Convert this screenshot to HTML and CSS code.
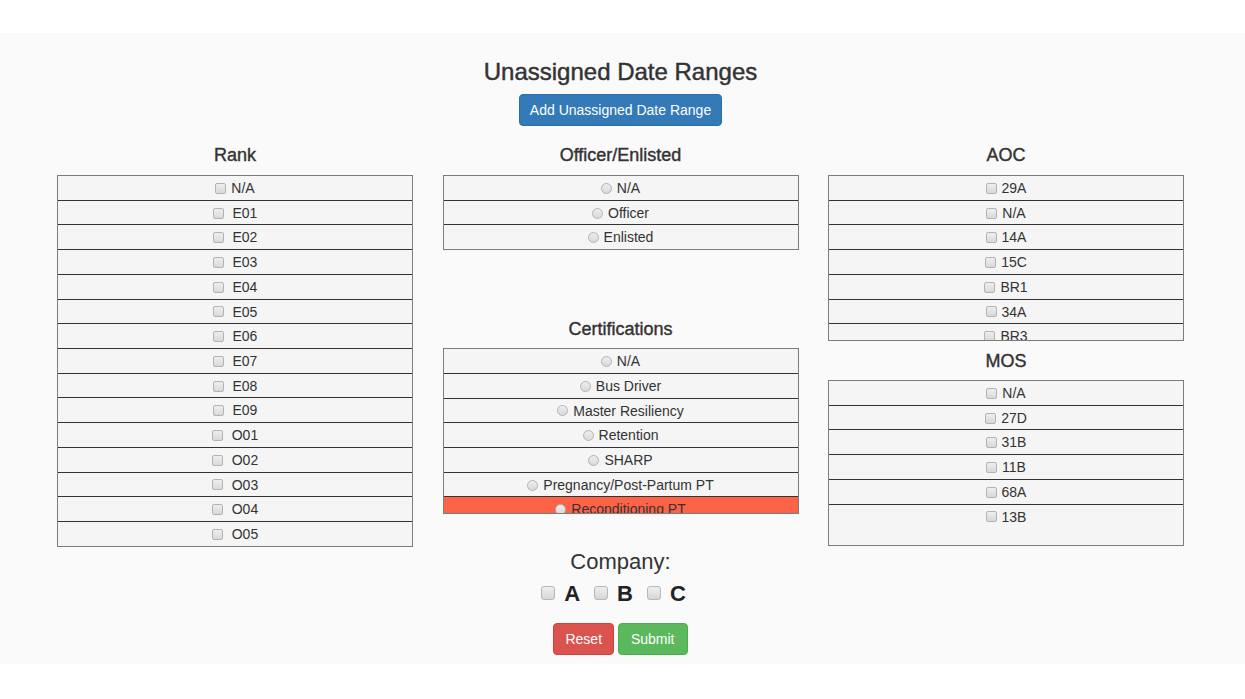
FILE: index.html
```html
<!DOCTYPE html>
<html lang="en">
<head>
<meta charset="utf-8">
<title>Unassigned Date Ranges</title>
<link rel="stylesheet" href="styles.css">
</head>
<body>
<div class="page">
  <h1 class="title">Unassigned Date Ranges</h1>
  <div class="center"><button class="btn btn-primary">Add Unassigned Date Range</button></div>

  <div class="columns">
    <div class="col">
      <h2 class="col-title">Rank</h2>
      <div class="list">
        <div class="item"><input type="checkbox" class="cb">N/A</div>
        <div class="item"><input type="checkbox" class="cb"> E01</div>
        <div class="item"><input type="checkbox" class="cb"> E02</div>
        <div class="item"><input type="checkbox" class="cb"> E03</div>
        <div class="item"><input type="checkbox" class="cb"> E04</div>
        <div class="item"><input type="checkbox" class="cb"> E05</div>
        <div class="item"><input type="checkbox" class="cb"> E06</div>
        <div class="item"><input type="checkbox" class="cb"> E07</div>
        <div class="item"><input type="checkbox" class="cb"> E08</div>
        <div class="item"><input type="checkbox" class="cb"> E09</div>
        <div class="item"><input type="checkbox" class="cb"> O01</div>
        <div class="item"><input type="checkbox" class="cb"> O02</div>
        <div class="item"><input type="checkbox" class="cb"> O03</div>
        <div class="item"><input type="checkbox" class="cb"> O04</div>
        <div class="item"><input type="checkbox" class="cb"> O05</div>
      </div>
    </div>

    <div class="col">
      <h2 class="col-title">Officer/Enlisted</h2>
      <div class="list">
        <div class="item"><input type="radio" name="oe" class="rd">N/A</div>
        <div class="item"><input type="radio" name="oe" class="rd">Officer</div>
        <div class="item"><input type="radio" name="oe" class="rd">Enlisted</div>
      </div>
      <h2 class="col-title cert-title">Certifications</h2>
      <div class="list scroll">
        <div class="item"><input type="radio" name="cert" class="rd">N/A</div>
        <div class="item"><input type="radio" name="cert" class="rd">Bus Driver</div>
        <div class="item"><input type="radio" name="cert" class="rd">Master Resiliency</div>
        <div class="item"><input type="radio" name="cert" class="rd">Retention</div>
        <div class="item"><input type="radio" name="cert" class="rd">SHARP</div>
        <div class="item"><input type="radio" name="cert" class="rd">Pregnancy/Post-Partum PT</div>
        <div class="item highlight"><input type="radio" name="cert" class="rd">Reconditioning PT</div>
      </div>
    </div>

    <div class="col">
      <h2 class="col-title">AOC</h2>
      <div class="list scroll">
        <div class="item"><input type="checkbox" class="cb">29A</div>
        <div class="item"><input type="checkbox" class="cb">N/A</div>
        <div class="item"><input type="checkbox" class="cb">14A</div>
        <div class="item"><input type="checkbox" class="cb">15C</div>
        <div class="item"><input type="checkbox" class="cb">BR1</div>
        <div class="item"><input type="checkbox" class="cb">34A</div>
        <div class="item"><input type="checkbox" class="cb">BR3</div>
      </div>
      <h2 class="col-title mos-title">MOS</h2>
      <div class="list scroll">
        <div class="item"><input type="checkbox" class="cb">N/A</div>
        <div class="item"><input type="checkbox" class="cb">27D</div>
        <div class="item"><input type="checkbox" class="cb">31B</div>
        <div class="item"><input type="checkbox" class="cb">11B</div>
        <div class="item"><input type="checkbox" class="cb">68A</div>
        <div class="item"><input type="checkbox" class="cb">13B</div>
      </div>
    </div>
  </div>

  <div class="company">Company:</div>
  <div class="company-options">
    <label class="opt"><input type="checkbox" class="cb-lg">A</label>
    <label class="opt"><input type="checkbox" class="cb-lg">B</label>
    <label class="opt"><input type="checkbox" class="cb-lg">C</label>
  </div>
  <div class="center actions">
    <button class="btn btn-danger">Reset</button>
    <button class="btn btn-success">Submit</button>
  </div>
</div>
</body>
</html>
```
FILE: styles.css
```css
html, body {
  margin: 0;
  padding: 0;
  background: #ffffff;
}

body {
  font-family: "Liberation Sans", Arial, Helvetica, sans-serif;
  font-size: 14px;
  color: #333333;
}

.page {
  margin-top: 33px;
  padding: 26px 4px 9px 0;
  background: #fafafa;
  box-shadow: 0 5px 6px -3px rgba(0, 0, 0, 0.07);
}

.title {
  margin: 0;
  font-size: 24px;
  line-height: 26px;
  font-weight: normal;
  text-align: center;
  -webkit-text-stroke: 0.45px #333333;
}

.center {
  text-align: center;
}

.btn {
  font-family: "Liberation Sans", Arial, Helvetica, sans-serif;
  font-size: 14px;
  height: 32px;
  line-height: 30px;
  padding: 0 10px;
  border: 1px solid transparent;
  border-radius: 4px;
  color: #ffffff;
  cursor: pointer;
  vertical-align: middle;
}

.btn-primary {
  margin-top: 9px;
  background: #337ab7;
  border-color: #2e6da4;
}

.btn-danger {
  background: #d9534f;
  border-color: #d43f3a;
  padding: 0 11px;
}

.btn-success {
  background: #5cb85c;
  border-color: #4cae4c;
  padding: 0 12px;
}

.columns {
  display: grid;
  grid-template-columns: repeat(3, 356px);
  column-gap: 29.5px;
  justify-content: center;
  margin-top: 19px;
  align-items: start;
}

.col-title {
  margin: 0 0 10px;
  font-size: 18px;
  line-height: 20px;
  font-weight: normal;
  text-align: center;
  -webkit-text-stroke: 0.4px #333333;
}

.cert-title {
  margin-top: 69px;
  margin-bottom: 9px;
}

.mos-title {
  margin-top: 10px;
  margin-bottom: 9px;
}

.list {
  border: 1px solid #7c7c7c;
  background: #f5f5f5;
}

.list.scroll {
  box-sizing: border-box;
  height: 166px;
  overflow-y: auto;
  scrollbar-width: none;
}

.list.scroll::-webkit-scrollbar {
  display: none;
}

.item {
  height: 23.72px;
  line-height: 25.6px;
  text-align: center;
  white-space: pre;
  border-top: 1px solid #333333;
  overflow: hidden;
}

.item:first-child {
  border-top: none;
}

.item.highlight {
  background: #fd6346;
}

.cb, .rd {
  -webkit-appearance: none;
  appearance: none;
  width: 11px;
  height: 11px;
  margin: -2px 5px 0 0;
  padding: 0;
  vertical-align: middle;
  border: 1px solid #b3b3b3;
  background: linear-gradient(#eeeeee, #d9d9d9);
  box-sizing: border-box;
}

.cb {
  border-radius: 2px;
}

.rd {
  border-radius: 50%;
}

.company {
  margin-top: 3px;
  font-size: 22px;
  line-height: 24px;
  text-align: center;
}

.company-options {
  margin-top: 7px;
  text-align: center;
  font-size: 0;
  line-height: 26px;
}

.opt {
  display: inline-block;
  margin-right: 14px;
  font-size: 22px;
  font-weight: bold;
  color: #222222;
  vertical-align: middle;
}

.cb-lg {
  -webkit-appearance: none;
  appearance: none;
  width: 14px;
  height: 14px;
  margin: -3px 9px 0 0;
  padding: 0;
  vertical-align: middle;
  border: 1px solid #b8b8b8;
  border-radius: 3px;
  background: linear-gradient(#efefef, #d6d6d6);
  box-sizing: border-box;
}

.actions {
  margin-top: 16px;
  font-size: 14px;
}
```
